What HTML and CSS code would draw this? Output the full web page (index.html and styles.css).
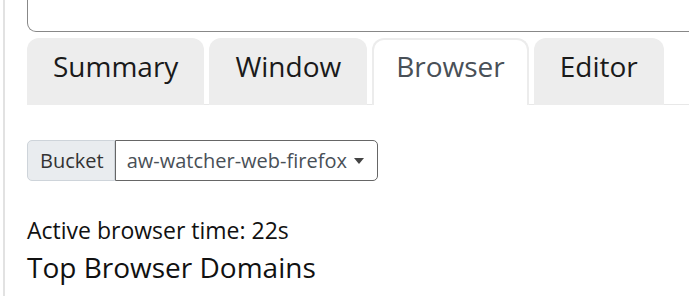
FILE: index.html
```html
<!DOCTYPE html>
<html lang="en">
<head>
    <meta charset="UTF-8">
    <meta name="viewport" content="width=device-width, initial-scale=1.0">
    <title>Activity - Browser</title>
    <link rel="stylesheet" href="styles.css">
</head>
<body>
    <div class="page">
        <div class="top-box"></div>

        <div class="tabs">
            <div class="tab">Summary</div>
            <div class="tab">Window</div>
            <div class="tab active">Browser</div>
            <div class="tab">Editor</div>
        </div>

        <div class="tab-content">
            <div class="input-group">
                <span class="prepend">Bucket</span>
                <div class="select">
                    aw-watcher-web-firefox
                    <span class="caret"></span>
                </div>
            </div>

            <p class="active-time">Active browser time: 22s</p>
            <h3>Top Browser Domains</h3>
        </div>
    </div>
</body>
</html>
```

FILE: styles.css
```css
body {
    font-family: 'Open Sans', 'DejaVu Sans', sans-serif;
    color: #111;
    background-color: #fff;
    margin: 0;
    padding: 0;
    overflow: hidden;
}

.page {
    margin-left: 3px;
    border-left: 2px solid #e2e2e2;
    padding-left: 22px;
    min-height: 100vh;
    box-sizing: border-box;
}

.top-box {
    height: 32px;
    box-sizing: border-box;
    margin-right: -20px;
    border: 1px solid #888;
    border-top: none;
    border-radius: 0 0 9px 9px;
}

.tabs {
    display: flex;
    margin-top: 6px;
    margin-right: -20px;
    border-bottom: 1px solid #e8e8e8;
}

.tab {
    display: flex;
    align-items: center;
    height: 67px;
    padding: 0 26px 12px;
    box-sizing: border-box;
    margin-right: 5px;
    margin-bottom: -1px;
    background-color: #ededed;
    border-radius: 12px 12px 0 0;
    font-size: 28px;
    color: #1a1a1a;
}

.tab.active {
    background-color: #fff;
    border: 2px solid #ececec;
    border-bottom: none;
    color: #495057;
    padding: 0 22px 14px;
}

.tab-content {
    padding-top: 35px;
}

.input-group {
    display: flex;
    height: 41px;
}

.prepend {
    display: flex;
    align-items: center;
    padding: 0 10px 0 12px;
    background-color: #e9ecef;
    border: 1px solid #ced4da;
    border-radius: 5px 0 0 5px;
    font-size: 20px;
    color: #333;
}

.select {
    display: flex;
    align-items: center;
    width: 250px;
    padding-left: 11px;
    border: 1px solid #666;
    border-radius: 0 5px 5px 0;
    font-size: 20px;
    color: #495057;
}

.caret {
    margin-left: 7px;
    width: 0;
    height: 0;
    border-left: 5px solid transparent;
    border-right: 5px solid transparent;
    border-top: 6px solid #444;
}

.active-time {
    margin: 33px 0 0;
    font-size: 23px;
}

h3 {
    margin: 2px 0 0;
    font-size: 28px;
    font-weight: normal;
}
```
